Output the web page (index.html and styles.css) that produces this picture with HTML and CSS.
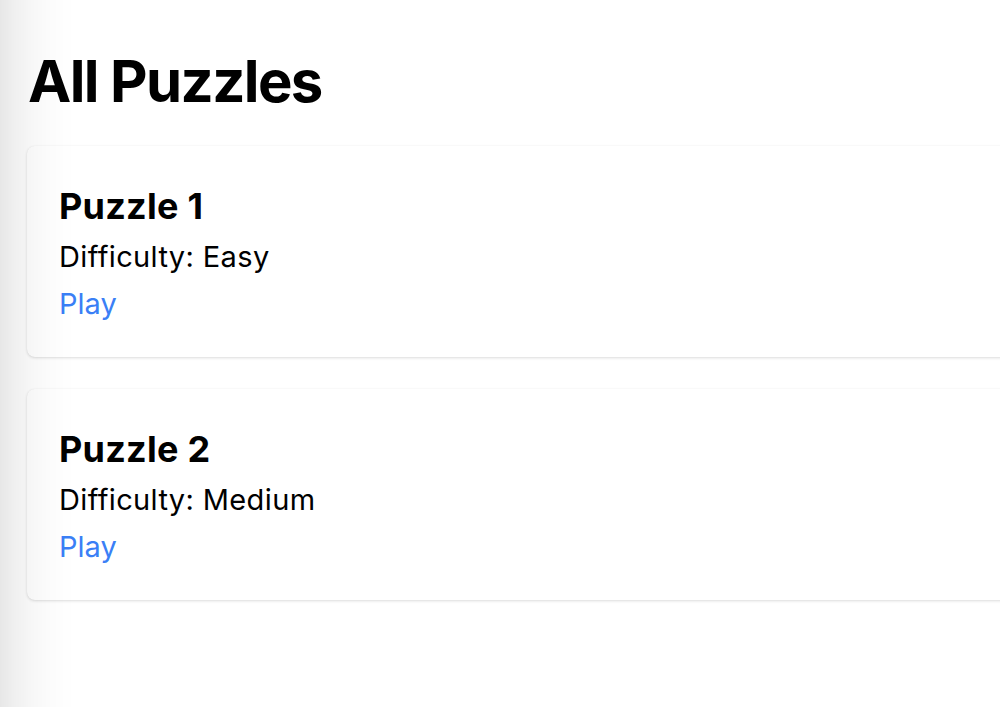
FILE: index.html
```html
<!DOCTYPE html>
<html lang="en">
<head>
<meta charset="utf-8">
<title>All Puzzles</title>
<link rel="stylesheet" href="styles.css">
</head>
<body>
<div class="edge-shade"></div>
<main class="page">
  <h1 class="page-title">All Puzzles</h1>
  <ul class="puzzle-list">
    <li class="puzzle-card">
      <h2 class="puzzle-name">Puzzle 1</h2>
      <p class="puzzle-difficulty">Difficulty: Easy</p>
      <a class="puzzle-play" href="#">Play</a>
    </li>
    <li class="puzzle-card">
      <h2 class="puzzle-name">Puzzle 2</h2>
      <p class="puzzle-difficulty">Difficulty: Medium</p>
      <a class="puzzle-play" href="#">Play</a>
    </li>
  </ul>
</main>
</body>
</html>
```
FILE: styles.css
```css
html, body {
  margin: 0;
  padding: 0;
  overflow: hidden;
  background: #ffffff;
}

body {
  font-family: Inter, "Noto Sans", "Liberation Sans", sans-serif;
  color: #000;
  width: 1000px;
  height: 707px;
}

.edge-shade {
  position: fixed;
  left: 0;
  top: 0;
  width: 75px;
  height: 100%;
  pointer-events: none;
  z-index: 10;
  background: linear-gradient(to right,
    rgba(0,0,0,0.095) 0px,
    rgba(0,0,0,0.06) 15px,
    rgba(0,0,0,0.032) 32px,
    rgba(0,0,0,0.012) 52px,
    rgba(0,0,0,0) 75px);
}

.page {
  padding: 46px 0 0 27px;
  width: 1010px;
}

.page-title {
  margin: 0 0 30px 1px;
  font-size: 58px;
  line-height: 70px;
  font-weight: 700;
  letter-spacing: -1.6px;
}

.puzzle-list {
  list-style: none;
  margin: 0;
  padding: 0;
  display: flex;
  flex-direction: column;
  gap: 32px;
}

.puzzle-card {
  background: #fff;
  border-radius: 8px;
  padding: 37px 32px 30px;
  display: flex;
  flex-direction: column;
  align-items: flex-start;
  box-shadow: 0 1px 3px rgba(0,0,0,0.14), 0 0 1px rgba(0,0,0,0.06);
}

.puzzle-name {
  margin: 0;
  font-size: 36px;
  line-height: 47px;
  font-weight: 700;
  letter-spacing: 0.25px;
}

.puzzle-difficulty {
  margin: 3px 0 0;
  font-size: 29px;
  line-height: 47px;
  font-weight: 400;
  letter-spacing: 0.37px;
}

.puzzle-play {
  font-size: 29px;
  line-height: 47px;
  color: #3a7ff6;
  text-decoration: none;
}
```
